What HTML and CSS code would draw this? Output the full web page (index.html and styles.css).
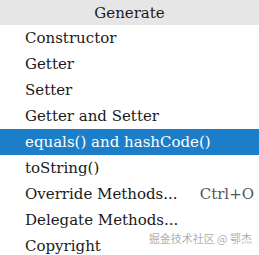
FILE: index.html
```html
<!DOCTYPE html>
<html>
<head>
<meta charset="utf-8">
<link rel="stylesheet" href="styles.css">
</head>
<body>
<div class="menu">
  <div class="header">Generate</div>
  <div class="item">Constructor</div>
  <div class="item">Getter</div>
  <div class="item">Setter</div>
  <div class="item">Getter and Setter</div>
  <div class="item selected">equals() and hashCode()</div>
  <div class="item">toString()</div>
  <div class="item"><span class="label">Override Methods...</span><span class="shortcut">Ctrl+O</span></div>
  <div class="item">Delegate Methods...</div>
  <div class="item"><span class="label">Copyright</span><span class="watermark">掘金技术社区 @ 鄂杰</span></div>
</div>
</body>
</html>
```
FILE: styles.css
```css
html, body {
  margin: 0;
  padding: 0;
  background: #ffffff;
}
.menu {
  width: 259px;
  height: 255px;
  overflow: hidden;
  font-family: "DejaVu Serif", serif;
  font-size: 15px;
  color: #1a1a1a;
}
.header {
  height: 25px;
  background: #e6e6e6;
  display: flex;
  align-items: center;
  justify-content: center;
}
.item {
  height: 26px;
  display: flex;
  align-items: center;
  padding-left: 25px;
  padding-right: 5px;
}
.item.selected {
  background: #1c7dc8;
  color: #ffffff;
}
.label {
  flex: 1;
}
.shortcut {
  color: #555555;
}
.watermark {
  font-family: "Noto Sans CJK SC", sans-serif;
  font-size: 11px;
  color: #b0b0b0;
  margin-top: -16px;
  padding-right: 2px;
}
```
